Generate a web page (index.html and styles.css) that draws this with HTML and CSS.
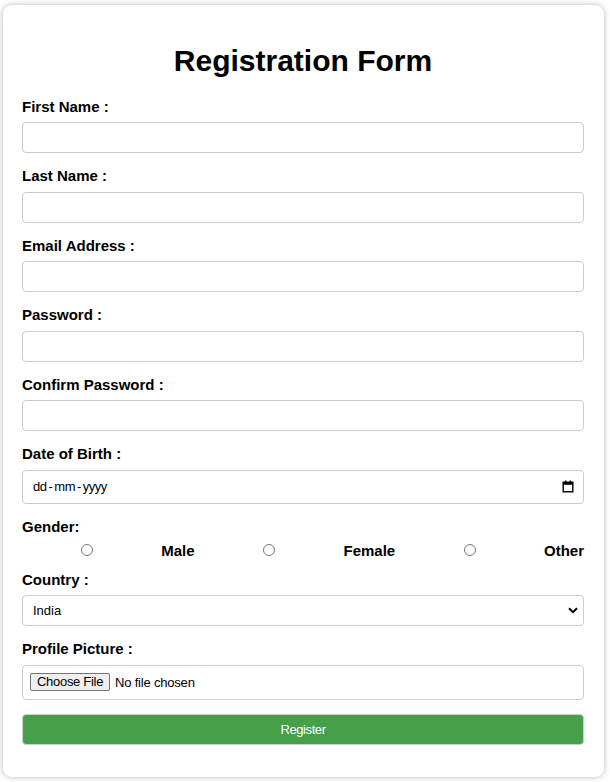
FILE: index.html
```html
<!DOCTYPE html>
<html lang="en">
<head>
<meta charset="utf-8">
<title>Registration Form</title>
<link rel="stylesheet" href="styles.css">
</head>
<body>
<div class="card">
  <h1 class="title">Registration Form</h1>
  <form class="form">
    <label class="label" for="fn">First Name :</label>
    <input class="field" id="fn" type="text">

    <label class="label" for="ln">Last Name :</label>
    <input class="field" id="ln" type="text">

    <label class="label" for="em">Email Address :</label>
    <input class="field" id="em" type="email">

    <label class="label" for="pw">Password :</label>
    <input class="field" id="pw" type="password">

    <label class="label" for="cpw">Confirm Password :</label>
    <input class="field" id="cpw" type="password">

    <label class="label">Date of Birth :</label>
    <div class="field date">
      <span class="date-text">dd<span class="sep">-</span>mm<span class="sep">-</span>yyyy</span>
      <svg class="cal" width="12" height="13" viewBox="0 0 12 13">
        <rect x="3" y="0.5" width="1.4" height="2.5" fill="#000"/>
        <rect x="7.6" y="0.5" width="1.4" height="2.5" fill="#000"/>
        <rect x="1.2" y="2.2" width="9.6" height="9.6" fill="none" stroke="#000" stroke-width="1.4"/>
        <rect x="1.2" y="2.2" width="9.6" height="2.6" fill="#000"/>
      </svg>
    </div>

    <div class="label gender-label">Gender:</div>
    <div class="radios">
      <span class="rcell"><input type="radio" name="g" class="radio"></span>
      <span class="rlabel">Male</span>
      <span class="rcell"><input type="radio" name="g" class="radio"></span>
      <span class="rlabel">Female</span>
      <span class="rcell"><input type="radio" name="g" class="radio"></span>
      <span class="rlabel">Other</span>
    </div>

    <label class="label">Country :</label>
    <div class="field select">
      <span>India</span>
      <svg class="chev" width="10" height="7" viewBox="0 0 10 7">
        <polyline points="1,1.2 5,5.2 9,1.2" fill="none" stroke="#000" stroke-width="2"/>
      </svg>
    </div>

    <label class="label">Profile Picture :</label>
    <div class="field file">
      <button type="button" class="file-btn">Choose File</button>
      <span class="file-text">No file chosen</span>
    </div>

    <button type="button" class="submit">Register</button>
  </form>
</div>
</body>
</html>
```

FILE: styles.css
```css
html, body {
  margin: 0;
  padding: 0;
  background: #fff;
}

body {
  font-family: "Liberation Sans", Arial, sans-serif;
  color: #000;
  padding: 5px 6px 5px 3px;
}

.card {
  width: 601px;
  box-sizing: border-box;
  padding: 39px 20px 32px 19px;
  background: #fff;
  border-radius: 9px;
  box-shadow: 0 0 6px rgba(0, 0, 0, 0.28);
}

.title {
  margin: 0 0 19.5px;
  font-size: 30px;
  line-height: 34px;
  font-weight: bold;
  text-align: center;
}

.form {
  display: flex;
  flex-direction: column;
}

.label {
  display: block;
  font-size: 15px;
  line-height: 17px;
  font-weight: bold;
  margin-bottom: 7.5px;
}

.field {
  box-sizing: border-box;
  width: 100%;
  height: 31px;
  margin: 0 0 14px;
  padding: 0 10px;
  border: 1px solid #ccc;
  border-radius: 4px;
  background: #fff;
  font-family: "Liberation Sans", Arial, sans-serif;
  font-size: 13px;
  color: #000;
}

.date {
  height: 34px;
  display: flex;
  align-items: center;
  justify-content: space-between;
  padding: 0 9px 0 10px;
}

.date-text {
  font-size: 13px;
  letter-spacing: -0.5px;
}

.sep {
  margin: 0 2px;
}

.cal {
  display: block;
}

.gender-label {
  margin-bottom: 7px;
}

.radios {
  display: grid;
  grid-template-columns: 129px 43.5px 149px 51.5px 149px 40px;
  align-items: center;
  height: 17px;
  margin-bottom: 12px;
}

.rcell {
  display: flex;
  justify-content: center;
  align-items: center;
}

.radio {
  margin: 0;
  width: 12px;
  height: 12px;
}

.rlabel {
  text-align: right;
  font-size: 15px;
  font-weight: bold;
  line-height: 17px;
  white-space: nowrap;
}

.select {
  display: flex;
  align-items: center;
  justify-content: space-between;
  padding: 0 5px 0 10px;
}

.chev {
  display: block;
}

.file {
  height: 35px;
  display: flex;
  align-items: center;
  padding: 0 7px;
}

.file-btn {
  font-family: "Liberation Sans", Arial, sans-serif;
  font-size: 13px;
  letter-spacing: -0.3px;
  color: #000;
  background: #efefef;
  border: 1px solid #767676;
  border-radius: 2px;
  height: 18px;
  padding: 0 6px;
  margin: 0 5px 0 0;
  line-height: 16px;
}

.file-text {
  font-size: 13px;
  letter-spacing: -0.2px;
}

.submit {
  box-sizing: border-box;
  width: 100%;
  height: 31px;
  margin: 0;
  border: 1px solid #d0d0d0;
  border-radius: 4px;
  background: #45a049;
  color: #fff;
  font-family: "Liberation Sans", Arial, sans-serif;
  font-size: 13px;
  letter-spacing: -0.4px;
}
```
